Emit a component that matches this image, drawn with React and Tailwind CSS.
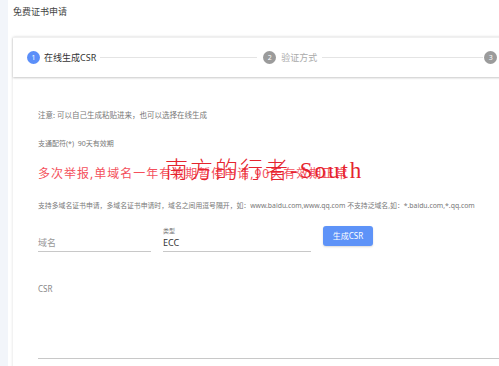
const font = "font-['Noto_Sans','Noto_Sans_CJK_SC',sans-serif]"

function StepDot({ n, active }) {
  return (
    <div
      className={`flex h-[13px] w-[13px] shrink-0 items-center justify-center rounded-full text-[7px] leading-none text-white ${
        active ? 'bg-[#5b8ff9]' : 'bg-[#9b9b9b]'
      }`}
    >
      {n}
    </div>
  )
}

export default function App() {
  return (
    <div className={`flex h-[366px] w-[499px] overflow-hidden bg-white ${font}`}>
      <div className="w-2 shrink-0 bg-[#f2f5fa]" />
      <div className="relative w-[560px] shrink-0 pl-[5px]">
        <div className="pt-[6px] text-[9px] leading-[12px] text-[#444]">免费证书申请</div>

        <section className="mt-[19px] bg-white shadow-[0_0_3px_rgba(0,0,0,0.14)]">
          {/* stepper */}
          <div className="flex h-[40px] items-center border-t border-[#f0f0f0] pl-[14px] shadow-[0_1px_2px_rgba(0,0,0,0.22)]">
            <StepDot n="1" active />
            <span className="ml-[4px] text-[9px] text-[#333]">在线生成CSR</span>
            <div className="ml-[4px] h-px w-[157px] bg-[#e4e4e4]" />
            <div className="ml-[6px]">
              <StepDot n="2" />
            </div>
            <span className="ml-[5px] text-[9px] text-[#aaa]">验证方式</span>
            <div className="ml-[5px] h-px w-[161px] bg-[#e4e4e4]" />
            <div className="ml-[1px]">
              <StepDot n="3" />
            </div>
          </div>

          {/* body */}
          <div className="px-[25px] pt-[33px] pb-[20px]">
            <p className="text-[7.5px] leading-[10px] text-[#777]">注意: 可以自己生成粘贴进来，也可以选择在线生成</p>
            <p className="mt-[19px] text-[7px] leading-[10px] text-[#777]">支通配符(*)&nbsp; 90天有效期</p>
            <p className="mt-[17px] text-[12px] leading-[16px] tracking-[1px] text-[#f4505c]">
              多次举报,单域名一年有效期暂停申请,90天有效期正常
            </p>
            <p className="mt-[19px] whitespace-nowrap text-[6.85px] leading-[10px] text-[#777]">
              支持多域名证书申请，多域名证书申请时，域名之间用逗号隔开，如：www.baidu.com,www.qq.com 不支持泛域名,如：*.baidu.com,*.qq.com
            </p>

            <div className="mt-[17px] flex items-start">
              <div className="w-[113px]">
                <div className="h-[7px]" />
                <div className="mt-[2px] border-b border-[#c8c8c8] pb-[2px] text-[9px] leading-[12px] text-[#999]">域名</div>
              </div>
              <div className="ml-[12px] w-[148px]">
                <div className="text-[6px] leading-[7px] text-[#777]">类型</div>
                <div className="mt-[2px] border-b border-[#c8c8c8] pb-[2px] text-[9px] leading-[12px] text-[#333]">ECC</div>
              </div>
              <button className="ml-[12px] -mt-[2px] h-[20px] w-[50px] rounded-[3px] bg-[#5e93f8] text-[8px] text-white shadow-[0_1px_2px_rgba(0,0,0,0.15)]">
                生成CSR
              </button>
            </div>

            <div className="mt-[31px] border-b border-[#c8c8c8]">
              <div className="text-[8px] leading-[11px] text-[#888]">CSR</div>
              <div className="h-[64px]" />
            </div>
          </div>
        </section>

        {/* watermark */}
        <div className="absolute left-[157px] top-[156px] whitespace-nowrap font-['Liberation_Serif','Noto_Sans_CJK_SC',serif] text-[23px] font-light leading-[30px] tracking-[2px] text-[#e5242e]">
          南方的行者-South
        </div>
      </div>
    </div>
  )
}
